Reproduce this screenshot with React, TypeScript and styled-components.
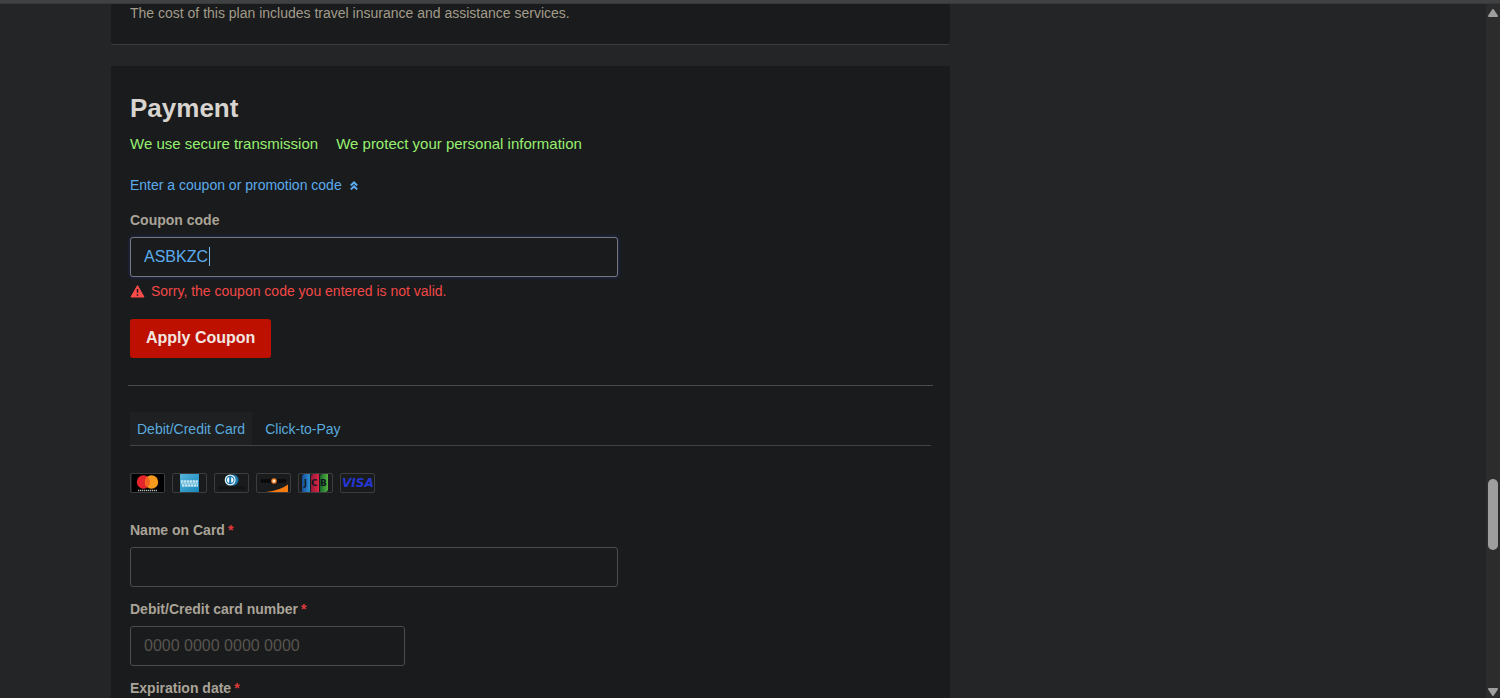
import React from "react";
import styled, { createGlobalStyle } from "styled-components";

const GlobalStyle = createGlobalStyle`
  * { box-sizing: border-box; }
  body {
    margin: 0;
    background: #242527;
    color: #aaa398;
    font-family: "Liberation Sans", Arial, sans-serif;
    font-size: 14px;
    line-height: 20px;
  }
`;

const Frame = styled.div`
  display: flex;
  flex-direction: column;
  height: 100vh;
  overflow: hidden;
`;

const TopBar = styled.div`
  flex: none;
  height: 4px;
  background: #404142;
  border-bottom: 1px solid #37393a;
`;

const Viewport = styled.div`
  display: flex;
  flex: 1;
  min-height: 0;
`;

const Page = styled.main`
  flex: 1;
  min-width: 0;
  overflow: hidden;
`;

const Container = styled.div`
  display: grid;
  grid-template-columns: minmax(0, 839px) minmax(0, 1fr);
  max-width: 1264px;
  margin: 0 auto;
`;

const Column = styled.div`
  display: flex;
  flex-direction: column;
  gap: 21px;
`;

const PlanCard = styled.section`
  padding: 0 19px 22px;
  background: #191b1c;
  border-bottom: 1px solid #3a3c3e;
  border-radius: 0 0 3px 3px;
`;

const PlanNote = styled.p`
  margin: 0;
  color: #a39c8b;
  line-height: 18px;
`;

const PaymentCard = styled.section`
  padding: 26px 19px 40px;
  background: #191b1c;
`;

const Title = styled.h2`
  margin: 0;
  color: #d8d4cf;
  font-size: 26px;
  line-height: 32px;
`;

const Assurances = styled.div`
  display: flex;
  gap: 18px;
  margin-top: 10px;
  color: #98ee70;
  font-size: 15px;
`;

const CouponToggle = styled.a`
  display: flex;
  align-items: center;
  gap: 8px;
  width: fit-content;
  margin: 21px 0 15px;
  color: #5cabee;
  text-decoration: none;
`;

const Field = styled.div`
  display: flex;
  flex-direction: column;
  gap: 7px;

  & + & { margin-top: 12px; }
`;

const Label = styled.label`
  font-weight: bold;
`;

const Required = styled.span`
  margin-left: 3px;
  color: #e03a3a;
`;

const InputBox = styled.div<{ $width: number }>`
  position: relative;
  width: 100%;
  max-width: ${(p) => p.$width}px;
`;

const Input = styled.input<{ $active?: boolean }>`
  display: block;
  width: 100%;
  height: 40px;
  padding: 0 13px;
  border: 1px solid ${(p) => (p.$active ? "#77777c" : "#4a4d4f")};
  border-radius: 3px;
  outline: none;
  background: #191b1c;
  box-shadow: ${(p) => (p.$active ? "0 0 3px 1px #20284e" : "none")};
  color: #5cabee;
  font-family: inherit;
  font-size: 16px;
  &::placeholder { color: #58544f; opacity: 1; }
`;

const Caret = styled.span`
  position: absolute;
  top: 10px;
  left: 79px;
  width: 1px;
  height: 19px;
  background: #78b9ee;
`;

const ErrorText = styled.p`
  display: flex;
  align-items: center;
  gap: 6px;
  margin: 4px 0 0;
  color: #f24848;
`;

const ApplyButton = styled.button`
  height: 39px;
  margin-top: 18px;
  padding: 0 16px 2px;
  border: 0;
  border-radius: 3px;
  background: #bd1000;
  color: #f3e6e0;
  font-family: inherit;
  font-size: 16px;
  font-weight: bold;
`;

const Divider = styled.hr`
  height: 1px;
  margin: 27px -2px 26px;
  border: 0;
  background: #464849;
`;

const Tabs = styled.div`
  display: flex;
  gap: 6px;
  border-bottom: 1px solid #414344;
`;

const Tab = styled.button<{ $selected?: boolean }>`
  height: 33px;
  padding: 0 7px;
  border: 0;
  background: ${(p) => (p.$selected ? "#1e2021" : "transparent")};
  color: #5aaade;
  font-family: inherit;
  font-size: 14px;
`;

const Brands = styled.div`
  display: flex;
  gap: 7px;
  margin: 27px 0;
`;

const Brand = styled.svg`
  display: block;
  width: 35px;
  height: 20px;
  border: 1px solid #3b3d3f;
  border-radius: 2px;
  font-family: "DejaVu Sans", sans-serif;
  font-weight: bold;
`;

const Scrollbar = styled.div`
  display: flex;
  flex: none;
  flex-direction: column;
  align-items: center;
  width: 14px;
  padding: 5px 0 2px;
  background: #2c2c2c;
  svg { display: block; }
`;

const ThumbSpace = styled.div<{ $share: number }>`
  flex: ${(p) => p.$share} 1 0;
`;

const Thumb = styled.div`
  flex: 71 1 0;
  width: 10px;
  border-radius: 5px;
  background: #9e9e9e;
`;

function BrandMarks() {
  return (
    <Brands>
      <Brand viewBox="0 0 33 18" role="img" aria-label="Mastercard">
        <rect width="33" height="18" x="1" fill="#000" />
        <circle cx="12.5" cy="8" r="6.7" fill="#e5242b" />
        <circle cx="20.5" cy="8" r="6.7" fill="#f59a1d" />
        <path d="M16.5 2.7a6.7 6.7 0 0 1 0 10.6a6.7 6.7 0 0 1 0-10.6" fill="#f26322" />
        <path d="M7 16.5h19" stroke="#b8b8b8" strokeWidth="1.3" strokeDasharray="1.3 .7" />
      </Brand>
      <Brand viewBox="0 0 33 18" role="img" aria-label="American Express">
        <defs>
          <linearGradient id="amex" x1="0" y1="0" x2="1" y2="1">
            <stop offset="0" stopColor="#56b6dc" />
            <stop offset="1" stopColor="#1685ba" />
          </linearGradient>
        </defs>
        <rect x="7" width="19" height="18" fill="url(#amex)" />
        <path d="M8 7.5h17M9 11.5h16" stroke="#c2e6f2" strokeWidth="2.4" strokeDasharray="2.4 .5" />
        <path d="M8 9.5h17" stroke="#8fcce3" strokeWidth="1.6" />
      </Brand>
      <Brand viewBox="0 0 33 18" role="img" aria-label="Diners Club">
        <circle cx="18" cy="6" r="5.5" fill="#1676ac" />
        <circle cx="15.2" cy="6" r="5.5" fill="#e2f0f5" />
        <circle cx="15.2" cy="6" r="4.2" fill="#1676ac" />
        <path d="M14.2 3v6a3.1 3.1 0 0 1 0-6M16.2 3v6a3.1 3.1 0 0 0 0-6" fill="#f4fafc" />
        <path d="M3 14h27" stroke="#0f1112" strokeWidth="3" strokeDasharray="2 .6" />
      </Brand>
      <Brand viewBox="0 0 33 18" role="img" aria-label="Discover">
        <path d="M4 7h25" stroke="#060606" strokeWidth="3.4" strokeDasharray="2.5 .5" />
        <circle cx="17" cy="7" r="2.8" fill="#ed7b26" />
        <circle cx="17" cy="7" r="1.5" fill="#ffe5c5" />
        <path d="M9 18Q23 16.5 31 10.5V18z" fill="#f57a10" />
      </Brand>
      <Brand viewBox="0 0 33 18" role="img" aria-label="JCB">
        <defs>
          <linearGradient id="jcbBlue"><stop stopColor="#164d99" /><stop offset="1" stopColor="#2d91cf" /></linearGradient>
          <linearGradient id="jcbRed"><stop stopColor="#94183a" /><stop offset="1" stopColor="#e22645" /></linearGradient>
          <linearGradient id="jcbGreen"><stop stopColor="#17662d" /><stop offset="1" stopColor="#57b540" /></linearGradient>
        </defs>
        <path d="M6 0h5v18H3V3q0-3 3-3" fill="url(#jcbBlue)" />
        <path d="M15 0h5v18h-8V3q0-3 3-3" fill="url(#jcbRed)" />
        <path d="M24 0h5v15q0 3-3 3h-5V3q0-3 3-3" fill="url(#jcbGreen)" />
        <text x="5" y="12" fill="#11161c" fontSize="8">J</text>
        <text x="12" y="12" fill="#11161c" fontSize="9">C</text>
        <text x="21" y="12" fill="#11161c" fontSize="9">B</text>
      </Brand>
      <Brand viewBox="0 0 33 18" role="img" aria-label="Visa">
        <text x="1" y="13" fill="#2537d0" fontSize="12" fontStyle="italic">VISA</text>
      </Brand>
    </Brands>
  );
}

export default function App() {
  return (
    <>
      <GlobalStyle />
      <Frame>
        <TopBar />
        <Viewport>
          <Page>
            <Container>
              <Column>
                <PlanCard>
                  <PlanNote>The cost of this plan includes travel insurance and assistance services.</PlanNote>
                </PlanCard>
                <PaymentCard>
                  <Title>Payment</Title>
                  <Assurances>
                    <span>We use secure transmission</span>
                    <span>We protect your personal information</span>
                  </Assurances>
                  <CouponToggle href="#coupon">
                    Enter a coupon or promotion code
                    <svg width="8" height="10" viewBox="0 0 8 10" fill="none" stroke="currentColor" strokeWidth="2" aria-hidden="true">
                      <path d="M.8 5.4L4 2.4L7.2 5.4M.8 9.4L4 6.4L7.2 9.4" />
                    </svg>
                  </CouponToggle>
                  <Field>
                    <Label htmlFor="coupon">Coupon code</Label>
                    <InputBox $width={488}>
                      <Input id="coupon" defaultValue="ASBKZC" $active />
                      <Caret />
                    </InputBox>
                  </Field>
                  <ErrorText role="alert">
                    <svg width="15" height="14" viewBox="0 0 15 14" aria-hidden="true">
                      <path d="M7.5 1.5L14 13H1z" fill="#fa4b4b" stroke="#fa4b4b" strokeLinejoin="round" />
                      <path d="M7.5 5v3.8M7.5 10.2v1.5" stroke="#191b1c" strokeWidth="1.5" />
                    </svg>
                    Sorry, the coupon code you entered is not valid.
                  </ErrorText>
                  <ApplyButton type="button">Apply Coupon</ApplyButton>
                  <Divider />
                  <Tabs role="tablist">
                    <Tab type="button" role="tab" aria-selected="true" $selected>Debit/Credit Card</Tab>
                    <Tab type="button" role="tab" aria-selected="false">Click-to-Pay</Tab>
                  </Tabs>
                  <BrandMarks />
                  <form>
                    <Field>
                      <Label htmlFor="holder">Name on Card<Required>*</Required></Label>
                      <InputBox $width={488}><Input id="holder" /></InputBox>
                    </Field>
                    <Field>
                      <Label htmlFor="number">Debit/Credit card number<Required>*</Required></Label>
                      <InputBox $width={275}><Input id="number" placeholder="0000 0000 0000 0000" /></InputBox>
                    </Field>
                    <Field>
                      <Label htmlFor="expiry">Expiration date<Required>*</Required></Label>
                      <InputBox $width={275}><Input id="expiry" /></InputBox>
                    </Field>
                  </form>
                </PaymentCard>
              </Column>
            </Container>
          </Page>
          <Scrollbar aria-hidden="true">
            <svg width="10" height="8" viewBox="0 0 10 8"><path d="M5 1L9 7H1z" fill="#9e9e9e" stroke="#9e9e9e" strokeWidth="2" strokeLinejoin="round" /></svg>
            <ThumbSpace $share={461} />
            <Thumb />
            <ThumbSpace $share={138} />
            <svg width="10" height="8" viewBox="0 0 10 8"><path d="M5 7L9 1H1z" fill="#9e9e9e" stroke="#9e9e9e" strokeWidth="2" strokeLinejoin="round" /></svg>
          </Scrollbar>
        </Viewport>
      </Frame>
    </>
  );
}
